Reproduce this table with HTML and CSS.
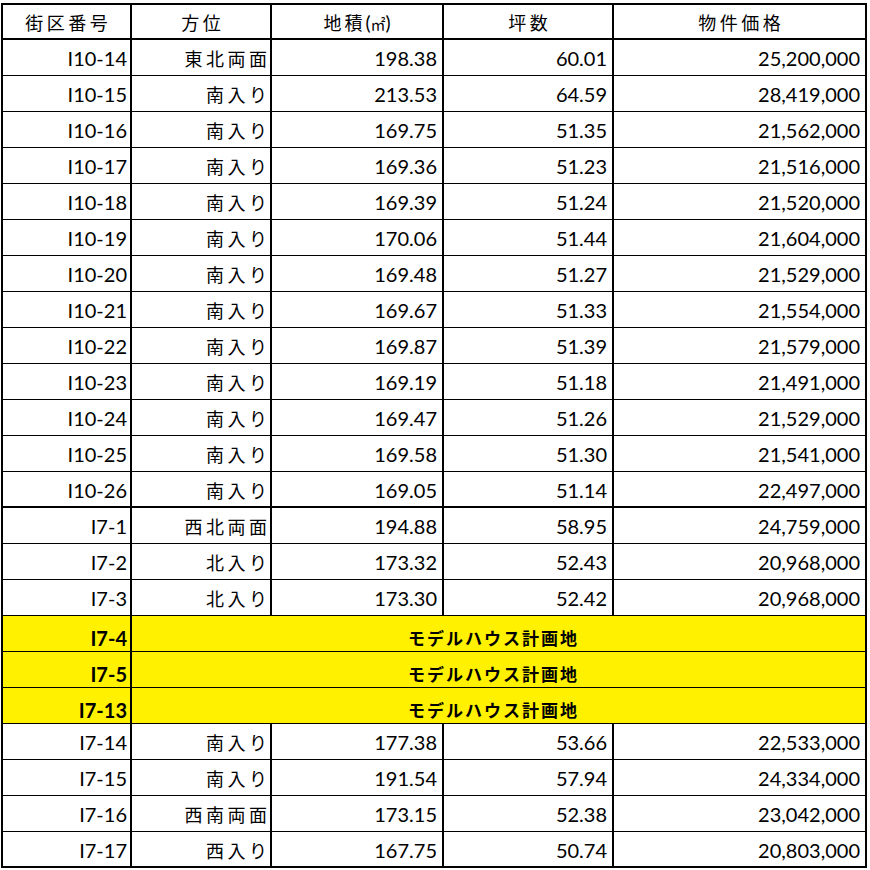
FILE: index.html
```html
<!DOCTYPE html>
<html lang="ja">
<head>
<meta charset="utf-8">
<title>物件価格表</title>
<link rel="stylesheet" href="styles.css">
</head>
<body>
<table class="price-table">
  <colgroup>
    <col class="c-lot">
    <col class="c-dir">
    <col class="c-area">
    <col class="c-tsubo">
    <col class="c-price">
  </colgroup>
  <thead>
    <tr class="head-row">
      <th><span class="jp-h">街区番号</span></th>
      <th><span class="jp-h">方位</span></th>
      <th><span class="jp-h area">地積</span><span class="unit">(<span class="sq">㎡</span>)</span></th>
      <th><span class="jp-h">坪数</span></th>
      <th><span class="jp-h">物件価格</span></th>
    </tr>
  </thead>
  <tbody>
    <tr><td class="num lot">I10-14</td><td class="dir"><span class="jp">東北両面</span></td><td class="num">198.38</td><td class="num">60.01</td><td class="num">25,200,000</td></tr>
    <tr><td class="num lot">I10-15</td><td class="dir"><span class="jp">南入り</span></td><td class="num">213.53</td><td class="num">64.59</td><td class="num">28,419,000</td></tr>
    <tr><td class="num lot">I10-16</td><td class="dir"><span class="jp">南入り</span></td><td class="num">169.75</td><td class="num">51.35</td><td class="num">21,562,000</td></tr>
    <tr><td class="num lot">I10-17</td><td class="dir"><span class="jp">南入り</span></td><td class="num">169.36</td><td class="num">51.23</td><td class="num">21,516,000</td></tr>
    <tr><td class="num lot">I10-18</td><td class="dir"><span class="jp">南入り</span></td><td class="num">169.39</td><td class="num">51.24</td><td class="num">21,520,000</td></tr>
    <tr><td class="num lot">I10-19</td><td class="dir"><span class="jp">南入り</span></td><td class="num">170.06</td><td class="num">51.44</td><td class="num">21,604,000</td></tr>
    <tr><td class="num lot">I10-20</td><td class="dir"><span class="jp">南入り</span></td><td class="num">169.48</td><td class="num">51.27</td><td class="num">21,529,000</td></tr>
    <tr><td class="num lot">I10-21</td><td class="dir"><span class="jp">南入り</span></td><td class="num">169.67</td><td class="num">51.33</td><td class="num">21,554,000</td></tr>
    <tr><td class="num lot">I10-22</td><td class="dir"><span class="jp">南入り</span></td><td class="num">169.87</td><td class="num">51.39</td><td class="num">21,579,000</td></tr>
    <tr><td class="num lot">I10-23</td><td class="dir"><span class="jp">南入り</span></td><td class="num">169.19</td><td class="num">51.18</td><td class="num">21,491,000</td></tr>
    <tr><td class="num lot">I10-24</td><td class="dir"><span class="jp">南入り</span></td><td class="num">169.47</td><td class="num">51.26</td><td class="num">21,529,000</td></tr>
    <tr><td class="num lot">I10-25</td><td class="dir"><span class="jp">南入り</span></td><td class="num">169.58</td><td class="num">51.30</td><td class="num">21,541,000</td></tr>
    <tr class="group-end"><td class="num lot">I10-26</td><td class="dir"><span class="jp">南入り</span></td><td class="num">169.05</td><td class="num">51.14</td><td class="num">22,497,000</td></tr>
    <tr><td class="num lot">I7-1</td><td class="dir"><span class="jp">西北両面</span></td><td class="num">194.88</td><td class="num">58.95</td><td class="num">24,759,000</td></tr>
    <tr><td class="num lot">I7-2</td><td class="dir"><span class="jp">北入り</span></td><td class="num">173.32</td><td class="num">52.43</td><td class="num">20,968,000</td></tr>
    <tr><td class="num lot">I7-3</td><td class="dir"><span class="jp">北入り</span></td><td class="num">173.30</td><td class="num">52.42</td><td class="num">20,968,000</td></tr>
    <tr class="model"><td class="num lot">I7-4</td><td colspan="4" class="model-cell"><span class="jp-b">モデルハウス計画地</span></td></tr>
    <tr class="model"><td class="num lot">I7-5</td><td colspan="4" class="model-cell"><span class="jp-b">モデルハウス計画地</span></td></tr>
    <tr class="model"><td class="num lot">I7-13</td><td colspan="4" class="model-cell"><span class="jp-b">モデルハウス計画地</span></td></tr>
    <tr><td class="num lot">I7-14</td><td class="dir"><span class="jp">南入り</span></td><td class="num">177.38</td><td class="num">53.66</td><td class="num">22,533,000</td></tr>
    <tr><td class="num lot">I7-15</td><td class="dir"><span class="jp">南入り</span></td><td class="num">191.54</td><td class="num">57.94</td><td class="num">24,334,000</td></tr>
    <tr><td class="num lot">I7-16</td><td class="dir"><span class="jp">西南両面</span></td><td class="num">173.15</td><td class="num">52.38</td><td class="num">23,042,000</td></tr>
    <tr><td class="num lot">I7-17</td><td class="dir"><span class="jp">西入り</span></td><td class="num">167.75</td><td class="num">50.74</td><td class="num">20,803,000</td></tr>
  </tbody>
</table>
</body>
</html>
```
FILE: styles.css
```css
html, body {
  margin: 0;
  padding: 0;
  background: #fff;
}

body {
  padding: 3px 0 0 1px;
  font-family: Lato, "Noto Sans CJK JP", sans-serif;
  color: #000;
}

.price-table {
  border-collapse: collapse;
  table-layout: fixed;
  width: 866px;
  border: 2px solid #000;
}

.c-lot { width: 129px; }
.c-dir { width: 140px; }
.c-area { width: 172px; }
.c-tsubo { width: 170px; }
.c-price { width: 253px; }

.price-table th,
.price-table td {
  border-left: 2px solid #000;
  border-right: 2px solid #000;
  border-top: 1px solid #000;
  border-bottom: 1px solid #000;
  padding: 0;
  height: 36px;
  box-sizing: border-box;
  white-space: nowrap;
  vertical-align: middle;
}

.price-table .head-row th {
  height: 35px;
  border-bottom: 2px solid #000;
  border-top: 2px solid #000;
  font-weight: normal;
  text-align: center;
  padding: 1px 0 0 0;
}

.price-table .group-end td {
  border-bottom: 2px solid #000;
}

.price-table .num {
  text-align: right;
  font-family: Lato, sans-serif;
  font-size: 20px;
  padding: 2px 5px 0 0;
}

.price-table .lot {
  padding-right: 3px;
}

.price-table .dir {
  text-align: right;
  padding: 2px 3px 0 0;
}

.jp {
  font-family: "Noto Sans CJK JP", sans-serif;
  font-size: 18px;
  letter-spacing: 3.5px;
  margin-right: -3.5px;
}

.jp-h {
  font-family: "Noto Sans CJK JP", sans-serif;
  font-size: 18px;
  letter-spacing: 3.5px;
  margin-right: -3.5px;
}

.jp-h.area {
  margin-right: 0;
  letter-spacing: 3px;
}

.unit {
  font-family: Lato, sans-serif;
  font-size: 19px;
}

.sq {
  font-family: "Noto Sans CJK JP", sans-serif;
  font-size: 15px;
}

.price-table .model td {
  background: #fff100;
  vertical-align: bottom;
  padding-bottom: 1px;
}

.price-table .model .num {
  font-weight: bold;
  padding-right: 3px;
}

.price-table .model-cell {
  text-align: center;
  padding-right: 12px;
}

.jp-b {
  font-family: "Noto Sans CJK JP", sans-serif;
  font-weight: bold;
  font-size: 17px;
  letter-spacing: 2px;
  margin-right: -2px;
}
```
